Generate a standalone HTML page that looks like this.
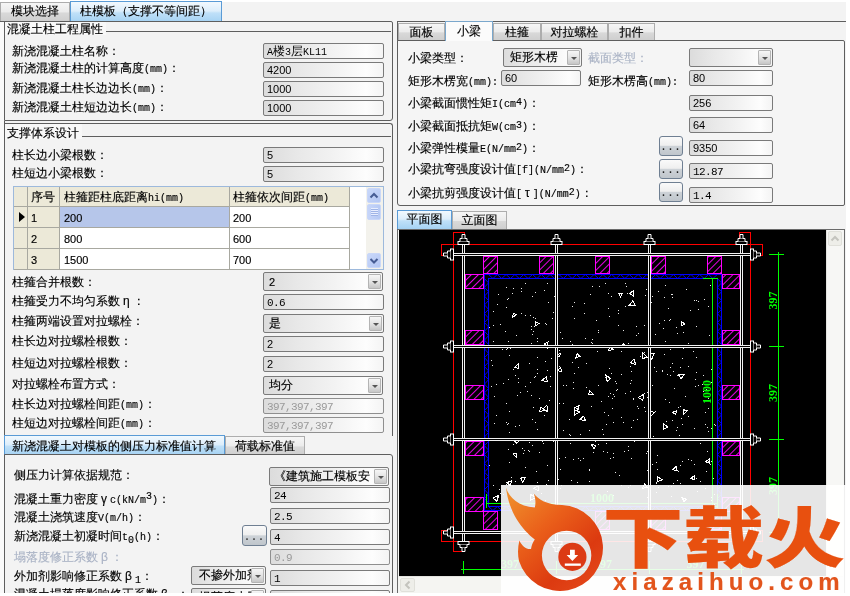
<!DOCTYPE html>
<html lang="zh-CN"><head><meta charset="utf-8"><title>柱模板（支撑不等间距）</title>
<style>
*{box-sizing:border-box;margin:0;padding:0}
html,body{width:850px;height:596px;overflow:hidden;background:#fff}
body{position:relative;font-family:"Liberation Mono","WenQuanYi Zen Hei",sans-serif;font-size:12px;font-weight:400;color:#000;line-height:14px;-webkit-text-stroke-width:0.15px}
.m{font-family:"Liberation Mono",monospace;font-size:10px;font-weight:400}
.g{padding:0 3px 0 3px;font-family:"Liberation Sans","WenQuanYi Zen Hei",sans-serif;font-size:12px}
.a{position:absolute}
.bg{position:absolute;left:0;top:2px;width:846px;height:591px;background:#f3f3f3}
.lb{position:absolute;white-space:nowrap;height:14px;line-height:14px}
.dis{color:#aab3c5}
.in{position:absolute;border:1px solid #7a7a7a;border-radius:2px;background:linear-gradient(90deg,#dcdcdc 0%,#e8e8e8 28%,#f2f2f2 58%,#fdfdfd 86%,#f4f4f4 100%);font-family:"Liberation Sans","WenQuanYi Zen Hei",sans-serif;font-size:11px;font-weight:400;line-height:13px;padding:1px 0 0 3px;white-space:nowrap;overflow:hidden;-webkit-text-stroke-width:0}
.in.d{color:#9a9a9a;border-color:#8f8f8f}
.cb{position:absolute;border:1px solid #7a7a7a;border-radius:2px;background:linear-gradient(90deg,#dcdcdc 0%,#e8e8e8 28%,#f2f2f2 58%,#fdfdfd 86%,#f4f4f4 100%);font-size:12px;line-height:16px;padding:1px 0 0 5px;white-space:nowrap;overflow:hidden}
.cb i{position:absolute;right:1px;top:1px;width:13px;bottom:1px;border:1px solid #b4b4b4;background:linear-gradient(#f6f6f6 0%,#e4e4e4 50%,#c6c6c6 100%);border-radius:1px}
.cb i:after{content:"";position:absolute;left:2.5px;top:5.5px;border:3px solid transparent;border-top:3px solid #555;border-bottom:0}
.btn{position:absolute;border:1px solid #6f7f92;border-radius:3px;background:linear-gradient(#fafafa 0%,#efefef 46%,#cdd2d7 52%,#c0c6cc 100%);text-align:center;font-family:"Liberation Mono",monospace;font-size:10px;font-weight:400;line-height:20px;letter-spacing:1px;color:#222}
.ln{position:absolute;background:#5e5e5e}
.tab{position:absolute;border:1px solid #adadad;border-bottom:0;background:linear-gradient(#f6f6f6 0%,#ebebeb 50%,#d9d9d9 55%,#cfcfcf 100%);text-align:center;white-space:nowrap}
.tab.sel{border-color:#5a9bd6;background:linear-gradient(#f2f9fe 0%,#ddeefb 45%,#bfe0f8 55%,#a5d2f3 100%)}
.tab.w{border-color:#7aa7cc;background:#fbfbfb}
</style></head>
<body>
<div id="root" style="position:absolute;left:0;top:0;width:850px;height:596px;will-change:transform">
<div class="bg"></div>
<div class="a" style="left:0;top:22px;width:4px;height:571px;background:#fafafa"></div>
<div class="tab " style="left:0px;top:2px;width:70px;height:19px;line-height:19px;">模块选择</div>
<div class="tab sel" style="left:70px;top:1px;width:152px;height:21px;line-height:21px;">柱模板（支撑不等间距）</div>
<div class="ln" style="left:0px;top:21px;width:5px;height:1px;"></div>
<div class="a" style="left:4px;top:21px;width:389px;height:100px;border:1px solid #5e5e5e;border-radius:0 2px 3px 0"></div>
<div class="a" style="left:4px;top:123px;width:389px;height:313px;border:1px solid #5e5e5e;border-bottom:0;border-radius:0 3px 0 0"></div>
<div class="ln" style="left:4px;top:121px;width:1px;height:472px;"></div>
<div class="ln" style="left:104px;top:31px;width:287px;height:1px;"></div>
<div class="ln" style="left:82px;top:136px;width:309px;height:1px;"></div>
<div class="a" style="left:5px;top:22px;width:101px;height:13px;background:#f8f8f8"></div>
<div class="lb " style="left:7px;top:23px">混凝土柱工程属性</div>
<div class="a" style="left:5px;top:124px;width:77px;height:15px;background:#f8f8f8"></div>
<div class="lb " style="left:7px;top:127px">支撑体系设计</div>
<div class="lb " style="left:12px;top:45px">新浇混凝土柱名称：</div>
<div class="lb " style="left:12px;top:62px">新浇混凝土柱的计算高度<span class="m">(mm)</span>：</div>
<div class="lb " style="left:12px;top:82px">新浇混凝土柱长边边长<span class="m">(mm)</span>：</div>
<div class="lb " style="left:12px;top:101px">新浇混凝土柱短边边长<span class="m">(mm)</span>：</div>
<div class="lb " style="left:12px;top:149px">柱长边小梁根数：</div>
<div class="lb " style="left:12px;top:167px">柱短边小梁根数：</div>
<div class="lb " style="left:12px;top:276px">柱箍合并根数：</div>
<div class="lb " style="left:12px;top:294px">柱箍受力不均匀系数<span class="g">η</span>：</div>
<div class="lb " style="left:12px;top:315px">柱箍两端设置对拉螺栓：</div>
<div class="lb " style="left:12px;top:335px">柱长边对拉螺栓根数：</div>
<div class="lb " style="left:12px;top:357px">柱短边对拉螺栓根数：</div>
<div class="lb " style="left:12px;top:378px">对拉螺栓布置方式：</div>
<div class="lb " style="left:12px;top:398px">柱长边对拉螺栓间距<span class="m">(mm)</span>：</div>
<div class="lb " style="left:12px;top:417px">柱短边对拉螺栓间距<span class="m">(mm)</span>：</div>
<div class="in " style="left:263px;top:43px;width:121px;height:16px"><span style="font-family:'Liberation Mono','WenQuanYi Zen Hei',sans-serif;font-size:12px;font-weight:400"><span class="m">A</span>楼<span class="m">3</span>层<span class="m">KL11</span></span></div>
<div class="in " style="left:263px;top:62px;width:121px;height:16px">4200</div>
<div class="in " style="left:263px;top:81px;width:121px;height:16px">1000</div>
<div class="in " style="left:263px;top:100px;width:121px;height:16px">1000</div>
<div class="in " style="left:263px;top:147px;width:121px;height:16px">5</div>
<div class="in " style="left:263px;top:166px;width:121px;height:16px">5</div>
<div class="cb" style="left:263px;top:272px;width:120px;height:19px;"><span style="font-family:'Liberation Sans',sans-serif;font-size:11px;font-weight:400">2</span><i></i></div>
<div class="in " style="left:263px;top:294px;width:121px;height:16px"><span class="m" style="font-size:11px;letter-spacing:-0.6px">0.6</span></div>
<div class="cb" style="left:263px;top:314px;width:121px;height:19px;">是<i></i></div>
<div class="in " style="left:263px;top:336px;width:121px;height:16px">2</div>
<div class="in " style="left:263px;top:356px;width:121px;height:16px">2</div>
<div class="cb" style="left:263px;top:376px;width:120px;height:19px;">均分<i></i></div>
<div class="in d" style="left:263px;top:398px;width:121px;height:16px"><span class="m" style="font-size:11px;letter-spacing:-0.6px">397,397,397</span></div>
<div class="in d" style="left:263px;top:417px;width:121px;height:16px"><span class="m" style="font-size:11px;letter-spacing:-0.6px">397,397,397</span></div>
<div class="a" style="left:13px;top:186px;width:371px;height:84px;background:#fff;border:1px solid #9db9dc"></div>
<div class="a" style="left:14px;top:187px;width:14px;height:20px;background:#ece9d8;border-right:1px solid #a8a8a0;border-bottom:1px solid #a8a8a0;padding:4px 0 0 4px;white-space:nowrap;overflow:hidden;"></div>
<div class="a" style="left:28px;top:187px;width:32px;height:20px;background:#ece9d8;border-right:1px solid #a8a8a0;border-bottom:1px solid #a8a8a0;padding:4px 0 0 4px;white-space:nowrap;overflow:hidden;padding-left:3px;">序号</div>
<div class="a" style="left:60px;top:187px;width:170px;height:20px;background:#ece9d8;border-right:1px solid #a8a8a0;border-bottom:1px solid #a8a8a0;padding:4px 0 0 4px;white-space:nowrap;overflow:hidden;">柱箍距柱底距离<span class="m">hi(mm)</span></div>
<div class="a" style="left:230px;top:187px;width:120px;height:20px;background:#ece9d8;border-right:1px solid #a8a8a0;border-bottom:1px solid #a8a8a0;padding:4px 0 0 4px;white-space:nowrap;overflow:hidden;padding-left:3px;">柱箍依次间距<span class="m">(mm)</span></div>
<div class="a" style="left:14px;top:207px;width:14px;height:21px;background:#ece9d8;border-right:1px solid #a8a8a0;border-bottom:1px solid #a8a8a0;padding:4px 0 0 4px;white-space:nowrap;overflow:hidden;"></div>
<div class="a" style="left:28px;top:207px;width:32px;height:21px;background:#ece9d8;border-right:1px solid #a8a8a0;border-bottom:1px solid #a8a8a0;padding:4px 0 0 4px;white-space:nowrap;overflow:hidden;font-family:'Liberation Sans',sans-serif;font-size:11px;font-weight:400;padding-top:4px;padding-left:3px;">1</div>
<div class="a" style="left:60px;top:207px;width:170px;height:21px;background:#b6c6ea;border-right:1px solid #a8a8a0;border-bottom:1px solid #a8a8a0;padding:4px 0 0 4px;white-space:nowrap;overflow:hidden;font-family:'Liberation Sans',sans-serif;font-size:11px;font-weight:400;padding-top:4px;">200</div>
<div class="a" style="left:230px;top:207px;width:120px;height:21px;background:#fff;border-right:1px solid #a8a8a0;border-bottom:1px solid #a8a8a0;padding:4px 0 0 4px;white-space:nowrap;overflow:hidden;font-family:'Liberation Sans',sans-serif;font-size:11px;font-weight:400;padding-top:4px;padding-left:3px;">200</div>
<div class="a" style="left:14px;top:228px;width:14px;height:21px;background:#ece9d8;border-right:1px solid #a8a8a0;border-bottom:1px solid #a8a8a0;padding:4px 0 0 4px;white-space:nowrap;overflow:hidden;"></div>
<div class="a" style="left:28px;top:228px;width:32px;height:21px;background:#ece9d8;border-right:1px solid #a8a8a0;border-bottom:1px solid #a8a8a0;padding:4px 0 0 4px;white-space:nowrap;overflow:hidden;font-family:'Liberation Sans',sans-serif;font-size:11px;font-weight:400;padding-top:4px;padding-left:3px;">2</div>
<div class="a" style="left:60px;top:228px;width:170px;height:21px;background:#fff;border-right:1px solid #a8a8a0;border-bottom:1px solid #a8a8a0;padding:4px 0 0 4px;white-space:nowrap;overflow:hidden;font-family:'Liberation Sans',sans-serif;font-size:11px;font-weight:400;padding-top:4px;">800</div>
<div class="a" style="left:230px;top:228px;width:120px;height:21px;background:#fff;border-right:1px solid #a8a8a0;border-bottom:1px solid #a8a8a0;padding:4px 0 0 4px;white-space:nowrap;overflow:hidden;font-family:'Liberation Sans',sans-serif;font-size:11px;font-weight:400;padding-top:4px;padding-left:3px;">600</div>
<div class="a" style="left:14px;top:249px;width:14px;height:21px;background:#ece9d8;border-right:1px solid #a8a8a0;border-bottom:1px solid #a8a8a0;padding:4px 0 0 4px;white-space:nowrap;overflow:hidden;"></div>
<div class="a" style="left:28px;top:249px;width:32px;height:21px;background:#ece9d8;border-right:1px solid #a8a8a0;border-bottom:1px solid #a8a8a0;padding:4px 0 0 4px;white-space:nowrap;overflow:hidden;font-family:'Liberation Sans',sans-serif;font-size:11px;font-weight:400;padding-top:4px;padding-left:3px;">3</div>
<div class="a" style="left:60px;top:249px;width:170px;height:21px;background:#fff;border-right:1px solid #a8a8a0;border-bottom:1px solid #a8a8a0;padding:4px 0 0 4px;white-space:nowrap;overflow:hidden;font-family:'Liberation Sans',sans-serif;font-size:11px;font-weight:400;padding-top:4px;">1500</div>
<div class="a" style="left:230px;top:249px;width:120px;height:21px;background:#fff;border-right:1px solid #a8a8a0;border-bottom:1px solid #a8a8a0;padding:4px 0 0 4px;white-space:nowrap;overflow:hidden;font-family:'Liberation Sans',sans-serif;font-size:11px;font-weight:400;padding-top:4px;padding-left:3px;">700</div>
<div class="a" style="left:19px;top:212px;border:5px solid transparent;border-left:6px solid #000;border-right:0"></div>
<div class="a" style="left:366px;top:187px;width:17px;height:82px;background:#f3f2ec"></div>
<div class="a" style="left:367px;top:188px;width:14px;height:15px;border:1px solid #c9d7f8;border-radius:2px;background:linear-gradient(135deg,#c9d8fa,#b3c6f3)"><svg width="12" height="13" viewBox="0 0 12 13" style="position:absolute;left:0;top:0"><path d="M2.5 8.5L6 5l3.5 3.5" fill="none" stroke="#465c94" stroke-width="2"/></svg></div>
<div class="a" style="left:367px;top:253px;width:14px;height:15px;border:1px solid #c9d7f8;border-radius:2px;background:linear-gradient(135deg,#c9d8fa,#b3c6f3)"><svg width="12" height="13" viewBox="0 0 12 13" style="position:absolute;left:0;top:0"><path d="M2.5 5L6 8.5l3.5-3.5" fill="none" stroke="#465c94" stroke-width="2"/></svg></div>
<div class="a" style="left:367px;top:204px;width:14px;height:16px;border:1px solid #c9d7f8;border-radius:2px;background:linear-gradient(90deg,#c6d5f9,#b6c9f4)"><div class="a" style="left:3px;top:3px;width:7px;height:8px;background:repeating-linear-gradient(#e8eeff 0,#e8eeff 1px,#9fb4e6 1px,#9fb4e6 2px)"></div></div>
<div class="tab sel" style="left:4px;top:435px;width:221px;height:20px;line-height:22px;text-align:left;padding-left:7px;">新浇混凝土对模板的侧压力标准值计算</div>
<div class="tab " style="left:225px;top:436px;width:80px;height:19px;line-height:20px;">荷载标准值</div>
<div class="a" style="left:4px;top:454px;width:389px;height:150px;border:1px solid #5e5e5e;border-radius:0 3px 0 0"></div>
<div class="lb " style="left:14px;top:469px">侧压力计算依据规范：</div>
<div class="lb " style="left:14px;top:511px">混凝土浇筑速度<span class="m">V(m/h)</span>：</div>
<div class="lb " style="left:14px;top:492px">混凝土重力密度<span class="g">γ</span><span class="m">c(kN/m<span style="position:relative;top:-4px">3</span>)</span>：</div>
<div class="lb " style="left:14px;top:530px">新浇混凝土初凝时间<span class="m">t<span style="position:relative;top:3px">0</span>(h)</span>：</div>
<div class="lb dis" style="left:14px;top:550px">塌落度修正系数<span class="g">β</span>：</div>
<div class="lb " style="left:14px;top:569px">外加剂影响修正系数<span class="g">β</span><span class="m"><span style="position:relative;top:3px">1</span></span>：</div>
<div class="lb " style="left:14px;top:587px">混凝土塌落度影响修正系数<span class="g">β</span><span class="m"><span style="position:relative;top:3px">2</span></span>：</div>
<div class="cb" style="left:269px;top:467px;width:120px;height:19px;padding-left:4px;">《建筑施工模板安<i></i></div>
<div class="in " style="left:270px;top:487px;width:120px;height:16px"><span class="m" style="font-size:11px;letter-spacing:-0.6px">24</span></div>
<div class="in " style="left:270px;top:508px;width:120px;height:16px"><span class="m" style="font-size:11px;letter-spacing:-0.6px">2.5</span></div>
<div class="in " style="left:270px;top:529px;width:120px;height:16px"><span class="m" style="font-size:11px;letter-spacing:-0.6px">4</span></div>
<div class="in d" style="left:270px;top:549px;width:120px;height:16px"><span class="m" style="font-size:11px;letter-spacing:-0.6px">0.9</span></div>
<div class="in " style="left:270px;top:570px;width:120px;height:16px"><span class="m" style="font-size:11px;letter-spacing:-0.6px">1</span></div>
<div class="in " style="left:270px;top:590px;width:120px;height:16px"></div>
<div class="btn" style="left:242px;top:525px;width:25px;height:21px;line-height:23px">...</div>
<div class="cb" style="left:191px;top:566px;width:75px;height:19px;padding-left:7px;">不掺外加剂<i></i></div>
<div class="cb" style="left:191px;top:588px;width:75px;height:19px;padding-left:7px;">坍落度小于<i></i></div>
<div class="ln" style="left:397px;top:21px;width:449px;height:1px;"></div>
<div class="ln" style="left:397px;top:21px;width:1px;height:20px;"></div>
<div class="a" style="left:397px;top:40px;width:448px;height:166px;border:1px solid #5e5e5e;background:#f5f5f5;border-radius:0 2px 2px 3px"></div>
<div class="tab " style="left:398px;top:23px;width:47px;height:17px;line-height:19px;">面板</div>
<div class="tab " style="left:493px;top:23px;width:48px;height:17px;line-height:19px;">柱箍</div>
<div class="tab " style="left:541px;top:23px;width:67px;height:17px;line-height:19px;">对拉螺栓</div>
<div class="tab " style="left:608px;top:23px;width:47px;height:17px;line-height:19px;">扣件</div>
<div class="tab w" style="left:445px;top:21px;width:48px;height:20px;line-height:20px;">小梁</div>
<div class="lb " style="left:408px;top:52px">小梁类型：</div>
<div class="lb " style="left:408px;top:75px">矩形木楞宽<span class="m">(mm):</span></div>
<div class="lb " style="left:408px;top:97px">小梁截面惯性矩<span class="m">I(cm<span style="position:relative;top:-2px">4</span>)</span>：</div>
<div class="lb " style="left:408px;top:120px">小梁截面抵抗矩<span class="m">W(cm<span style="position:relative;top:-2px">3</span>)</span>：</div>
<div class="lb " style="left:408px;top:142px">小梁弹性模量<span class="m">E(N/mm<span style="position:relative;top:-2px">2</span>)</span>：</div>
<div class="lb " style="left:408px;top:163px">小梁抗弯强度设计值<span class="m">[f](N/mm<span style="position:relative;top:-2px">2</span>)</span>：</div>
<div class="lb " style="left:408px;top:186px">小梁抗剪强度设计值<span class="m">[</span><span class="g">τ</span><span class="m">](N/mm<span style="position:relative;top:-2px">2</span>)</span>：</div>
<div class="cb" style="left:503px;top:48px;width:79px;height:19px;padding-left:6px;">矩形木楞<i></i></div>
<div class="lb dis" style="left:588px;top:52px">截面类型：</div>
<div class="cb" style="left:689px;top:48px;width:84px;height:19px;"><i></i></div>
<div class="in " style="left:501px;top:70px;width:80px;height:16px">60</div>
<div class="lb " style="left:588px;top:75px">矩形木楞高<span class="m">(mm):</span></div>
<div class="in " style="left:689px;top:70px;width:84px;height:16px">80</div>
<div class="in " style="left:689px;top:95px;width:84px;height:16px">256</div>
<div class="in " style="left:689px;top:117px;width:84px;height:16px">64</div>
<div class="in " style="left:689px;top:140px;width:84px;height:16px">9350</div>
<div class="in " style="left:689px;top:163px;width:84px;height:16px"><span class="m" style="font-size:11px;letter-spacing:-0.6px">12.87</span></div>
<div class="in " style="left:689px;top:187px;width:84px;height:16px"><span class="m" style="font-size:11px;letter-spacing:-0.6px">1.4</span></div>
<div class="btn" style="left:659px;top:136px;width:24px;height:20px;line-height:22px">...</div>
<div class="btn" style="left:659px;top:159px;width:24px;height:20px;line-height:22px">...</div>
<div class="btn" style="left:659px;top:182px;width:24px;height:20px;line-height:22px">...</div>
<div class="tab sel" style="left:397px;top:210px;width:55px;height:19px;line-height:18px;">平面图</div>
<div class="tab " style="left:452px;top:211px;width:55px;height:18px;line-height:18px;">立面图</div>
<div class="a" style="left:397px;top:229px;width:448px;height:365px;border:1px solid #6a6a6a;border-bottom:0;background:#f4f4f2"></div>
<svg class="a" style="left:399px;top:230px" width="427" height="346" viewBox="399 230 427 346" shape-rendering="crispEdges">
<rect x="399" y="229" width="427" height="347" fill="#000"/>
<defs><pattern id="hz" width="5" height="5" patternUnits="userSpaceOnUse" patternTransform="rotate(-45)"><rect width="5" height="5" fill="#000"/><line x1="0" y1="2.5" x2="5" y2="2.5" stroke="#f0f" stroke-width="0.9"/></pattern></defs>
<g fill="#e8e8e8"><rect x="591" y="406" width="1" height="1"/><rect x="698" y="385" width="1" height="1"/><rect x="604" y="412" width="1" height="1"/><rect x="531" y="395" width="1" height="1"/><rect x="631" y="458" width="1" height="1"/><rect x="510" y="348" width="1" height="1"/><rect x="509" y="462" width="1" height="1"/><rect x="646" y="289" width="1" height="1"/><rect x="711" y="497" width="1" height="1"/><rect x="637" y="419" width="1" height="1"/><rect x="525" y="283" width="1" height="1"/><rect x="608" y="293" width="1" height="1"/><rect x="532" y="334" width="1" height="1"/><rect x="496" y="384" width="1" height="1"/><rect x="589" y="470" width="1" height="1"/><rect x="606" y="424" width="1" height="1"/><rect x="602" y="429" width="1" height="1"/><rect x="592" y="343" width="1" height="1"/><rect x="714" y="504" width="1" height="1"/><rect x="679" y="439" width="1" height="1"/><rect x="560" y="332" width="1" height="1"/><rect x="554" y="296" width="1" height="1"/><rect x="662" y="370" width="1" height="1"/><rect x="680" y="367" width="1" height="1"/><rect x="706" y="471" width="1" height="1"/><rect x="489" y="327" width="1" height="1"/><rect x="695" y="386" width="1" height="1"/><rect x="711" y="369" width="1" height="1"/><rect x="506" y="422" width="1" height="1"/><rect x="665" y="341" width="1" height="1"/><rect x="509" y="355" width="1" height="1"/><rect x="707" y="451" width="1" height="1"/><rect x="516" y="335" width="1" height="1"/><rect x="512" y="293" width="1" height="1"/><rect x="669" y="320" width="1" height="1"/><rect x="615" y="381" width="1" height="1"/><rect x="532" y="445" width="1" height="1"/><rect x="519" y="425" width="1" height="1"/><rect x="515" y="375" width="1" height="1"/><rect x="537" y="341" width="1" height="1"/><rect x="708" y="461" width="1" height="1"/><rect x="558" y="479" width="1" height="1"/><rect x="537" y="369" width="1" height="1"/><rect x="682" y="424" width="1" height="1"/><rect x="512" y="503" width="1" height="1"/><rect x="537" y="338" width="1" height="1"/><rect x="664" y="354" width="1" height="1"/><rect x="556" y="297" width="1" height="1"/><rect x="509" y="411" width="1" height="1"/><rect x="544" y="415" width="1" height="1"/><rect x="573" y="382" width="1" height="1"/><rect x="706" y="389" width="1" height="1"/><rect x="619" y="475" width="1" height="1"/><rect x="530" y="315" width="1" height="1"/><rect x="694" y="464" width="1" height="1"/><rect x="545" y="323" width="1" height="1"/><rect x="656" y="492" width="1" height="1"/><rect x="533" y="494" width="1" height="1"/><rect x="688" y="416" width="1" height="1"/><rect x="584" y="303" width="1" height="1"/><rect x="498" y="497" width="1" height="1"/><rect x="543" y="439" width="1" height="1"/><rect x="547" y="465" width="1" height="1"/><rect x="624" y="346" width="1" height="1"/><rect x="529" y="442" width="1" height="1"/><rect x="505" y="331" width="1" height="1"/><rect x="615" y="472" width="1" height="1"/><rect x="628" y="343" width="1" height="1"/><rect x="696" y="326" width="1" height="1"/><rect x="493" y="341" width="1" height="1"/><rect x="590" y="294" width="1" height="1"/><rect x="529" y="363" width="1" height="1"/><rect x="618" y="310" width="1" height="1"/><rect x="571" y="480" width="1" height="1"/><rect x="711" y="428" width="1" height="1"/><rect x="645" y="411" width="1" height="1"/><rect x="521" y="288" width="1" height="1"/><rect x="493" y="485" width="1" height="1"/><rect x="647" y="497" width="1" height="1"/><rect x="494" y="423" width="1" height="1"/><rect x="598" y="444" width="1" height="1"/><rect x="561" y="505" width="1" height="1"/><rect x="506" y="403" width="1" height="1"/><rect x="656" y="483" width="1" height="1"/><rect x="656" y="438" width="1" height="1"/><rect x="668" y="486" width="1" height="1"/><rect x="569" y="434" width="1" height="1"/><rect x="693" y="476" width="1" height="1"/><rect x="583" y="458" width="1" height="1"/><rect x="684" y="409" width="1" height="1"/><rect x="630" y="366" width="1" height="1"/><rect x="621" y="417" width="1" height="1"/><rect x="507" y="424" width="1" height="1"/><rect x="713" y="478" width="1" height="1"/><rect x="654" y="367" width="1" height="1"/><rect x="655" y="411" width="1" height="1"/><rect x="589" y="469" width="1" height="1"/><rect x="508" y="449" width="1" height="1"/><rect x="496" y="415" width="1" height="1"/><rect x="598" y="332" width="1" height="1"/><rect x="647" y="392" width="1" height="1"/><rect x="628" y="487" width="1" height="1"/><rect x="547" y="283" width="1" height="1"/><rect x="557" y="433" width="1" height="1"/><rect x="535" y="318" width="1" height="1"/><rect x="694" y="428" width="1" height="1"/><rect x="589" y="481" width="1" height="1"/><rect x="563" y="430" width="1" height="1"/><rect x="534" y="377" width="1" height="1"/><rect x="671" y="486" width="1" height="1"/><rect x="688" y="366" width="1" height="1"/><rect x="621" y="351" width="1" height="1"/><rect x="520" y="392" width="1" height="1"/><rect x="678" y="471" width="1" height="1"/><rect x="650" y="494" width="1" height="1"/><rect x="552" y="318" width="1" height="1"/><rect x="591" y="342" width="1" height="1"/><rect x="537" y="373" width="1" height="1"/><rect x="630" y="391" width="1" height="1"/><rect x="560" y="469" width="1" height="1"/><rect x="711" y="382" width="1" height="1"/><rect x="506" y="287" width="1" height="1"/><rect x="686" y="289" width="1" height="1"/><rect x="649" y="408" width="1" height="1"/><rect x="559" y="458" width="1" height="1"/><rect x="493" y="311" width="1" height="1"/><rect x="592" y="286" width="1" height="1"/><rect x="677" y="333" width="1" height="1"/><rect x="521" y="291" width="1" height="1"/><rect x="631" y="380" width="1" height="1"/><rect x="631" y="427" width="1" height="1"/><rect x="671" y="496" width="1" height="1"/><rect x="644" y="325" width="1" height="1"/><rect x="596" y="320" width="1" height="1"/><rect x="491" y="386" width="1" height="1"/><rect x="650" y="320" width="1" height="1"/><rect x="551" y="358" width="1" height="1"/><rect x="647" y="397" width="1" height="1"/><rect x="628" y="450" width="1" height="1"/><rect x="578" y="458" width="1" height="1"/><rect x="694" y="300" width="1" height="1"/><rect x="700" y="443" width="1" height="1"/><rect x="518" y="382" width="1" height="1"/><rect x="630" y="485" width="1" height="1"/><rect x="574" y="408" width="1" height="1"/><rect x="688" y="459" width="1" height="1"/><rect x="702" y="384" width="1" height="1"/><rect x="636" y="326" width="1" height="1"/><rect x="652" y="464" width="1" height="1"/><rect x="634" y="441" width="1" height="1"/><rect x="537" y="482" width="1" height="1"/><rect x="711" y="500" width="1" height="1"/><rect x="610" y="458" width="1" height="1"/><rect x="561" y="485" width="1" height="1"/><rect x="682" y="358" width="1" height="1"/><rect x="508" y="379" width="1" height="1"/><rect x="613" y="453" width="1" height="1"/><rect x="599" y="286" width="1" height="1"/><rect x="672" y="294" width="1" height="1"/><rect x="670" y="319" width="1" height="1"/><rect x="565" y="457" width="1" height="1"/><rect x="521" y="313" width="1" height="1"/><rect x="606" y="443" width="1" height="1"/><rect x="679" y="435" width="1" height="1"/><rect x="703" y="391" width="1" height="1"/><rect x="704" y="299" width="1" height="1"/><rect x="539" y="398" width="1" height="1"/><rect x="555" y="444" width="1" height="1"/><rect x="633" y="398" width="1" height="1"/><rect x="680" y="406" width="1" height="1"/><rect x="559" y="366" width="1" height="1"/><rect x="680" y="483" width="1" height="1"/><rect x="536" y="471" width="1" height="1"/><rect x="708" y="398" width="1" height="1"/><rect x="618" y="325" width="1" height="1"/><rect x="610" y="393" width="1" height="1"/><rect x="626" y="286" width="1" height="1"/><rect x="708" y="396" width="1" height="1"/><rect x="580" y="460" width="1" height="1"/><rect x="616" y="390" width="1" height="1"/><rect x="645" y="295" width="1" height="1"/><rect x="611" y="373" width="1" height="1"/><rect x="705" y="488" width="1" height="1"/><rect x="550" y="386" width="1" height="1"/><rect x="518" y="378" width="1" height="1"/><rect x="673" y="483" width="1" height="1"/><rect x="597" y="351" width="1" height="1"/><rect x="532" y="419" width="1" height="1"/><rect x="698" y="309" width="1" height="1"/><rect x="665" y="285" width="1" height="1"/><rect x="533" y="331" width="1" height="1"/><rect x="644" y="352" width="1" height="1"/><rect x="569" y="419" width="1" height="1"/><rect x="513" y="444" width="1" height="1"/><rect x="517" y="395" width="1" height="1"/><rect x="546" y="324" width="1" height="1"/><rect x="609" y="378" width="1" height="1"/><rect x="574" y="373" width="1" height="1"/><rect x="609" y="316" width="1" height="1"/><rect x="535" y="422" width="1" height="1"/><rect x="633" y="399" width="1" height="1"/><rect x="681" y="418" width="1" height="1"/><rect x="683" y="332" width="1" height="1"/><rect x="656" y="462" width="1" height="1"/><rect x="693" y="351" width="1" height="1"/><rect x="560" y="488" width="1" height="1"/><rect x="538" y="505" width="1" height="1"/><rect x="690" y="310" width="1" height="1"/><rect x="543" y="443" width="1" height="1"/><rect x="548" y="302" width="1" height="1"/><rect x="677" y="375" width="1" height="1"/><rect x="668" y="308" width="1" height="1"/><rect x="580" y="434" width="1" height="1"/><rect x="493" y="325" width="1" height="1"/><rect x="643" y="485" width="1" height="1"/><rect x="708" y="306" width="1" height="1"/><rect x="603" y="451" width="1" height="1"/><rect x="603" y="434" width="1" height="1"/><rect x="532" y="296" width="1" height="1"/><rect x="513" y="288" width="1" height="1"/><rect x="614" y="396" width="1" height="1"/><rect x="618" y="313" width="1" height="1"/><rect x="531" y="326" width="1" height="1"/><rect x="679" y="503" width="1" height="1"/><rect x="698" y="301" width="1" height="1"/><rect x="503" y="494" width="1" height="1"/><rect x="593" y="452" width="1" height="1"/><rect x="563" y="385" width="1" height="1"/><rect x="605" y="377" width="1" height="1"/><rect x="625" y="283" width="1" height="1"/><rect x="647" y="470" width="1" height="1"/><rect x="530" y="382" width="1" height="1"/><rect x="656" y="371" width="1" height="1"/><rect x="533" y="317" width="1" height="1"/><rect x="605" y="283" width="1" height="1"/><rect x="691" y="460" width="1" height="1"/><rect x="648" y="474" width="1" height="1"/><rect x="631" y="371" width="1" height="1"/><rect x="625" y="393" width="1" height="1"/><rect x="711" y="461" width="1" height="1"/><rect x="547" y="485" width="1" height="1"/><rect x="657" y="455" width="1" height="1"/><rect x="673" y="371" width="1" height="1"/><rect x="692" y="478" width="1" height="1"/><rect x="646" y="453" width="1" height="1"/><rect x="662" y="371" width="1" height="1"/><rect x="652" y="296" width="1" height="1"/><rect x="566" y="385" width="1" height="1"/><rect x="491" y="360" width="1" height="1"/><rect x="633" y="420" width="1" height="1"/><rect x="541" y="493" width="1" height="1"/><rect x="640" y="356" width="1" height="1"/><rect x="638" y="408" width="1" height="1"/><rect x="609" y="368" width="1" height="1"/><rect x="715" y="425" width="1" height="1"/><rect x="647" y="451" width="1" height="1"/><rect x="710" y="285" width="1" height="1"/><rect x="628" y="446" width="1" height="1"/><rect x="547" y="370" width="1" height="1"/><rect x="500" y="324" width="1" height="1"/><rect x="574" y="302" width="1" height="1"/><rect x="546" y="484" width="1" height="1"/><rect x="613" y="394" width="1" height="1"/><rect x="708" y="408" width="1" height="1"/><rect x="714" y="424" width="1" height="1"/><rect x="672" y="297" width="1" height="1"/><rect x="624" y="451" width="1" height="1"/><rect x="499" y="489" width="1" height="1"/><rect x="525" y="386" width="1" height="1"/><rect x="527" y="391" width="1" height="1"/><rect x="627" y="293" width="1" height="1"/><rect x="703" y="375" width="1" height="1"/><rect x="608" y="415" width="1" height="1"/><rect x="572" y="344" width="1" height="1"/><rect x="637" y="406" width="1" height="1"/><rect x="553" y="441" width="1" height="1"/><rect x="556" y="283" width="1" height="1"/><rect x="544" y="290" width="1" height="1"/><rect x="524" y="450" width="1" height="1"/><rect x="577" y="482" width="1" height="1"/><rect x="658" y="291" width="1" height="1"/><rect x="712" y="493" width="1" height="1"/><rect x="506" y="484" width="1" height="1"/><rect x="586" y="387" width="1" height="1"/><rect x="709" y="335" width="1" height="1"/><rect x="607" y="491" width="1" height="1"/><rect x="652" y="385" width="1" height="1"/><rect x="710" y="464" width="1" height="1"/><rect x="625" y="306" width="1" height="1"/><rect x="630" y="383" width="1" height="1"/><rect x="535" y="292" width="1" height="1"/><rect x="608" y="308" width="1" height="1"/><rect x="589" y="430" width="1" height="1"/><rect x="592" y="339" width="1" height="1"/><rect x="621" y="374" width="1" height="1"/><rect x="665" y="399" width="1" height="1"/><rect x="714" y="494" width="1" height="1"/><rect x="655" y="334" width="1" height="1"/><rect x="515" y="481" width="1" height="1"/><rect x="666" y="421" width="1" height="1"/><rect x="570" y="341" width="1" height="1"/><rect x="644" y="407" width="1" height="1"/><rect x="623" y="422" width="1" height="1"/><rect x="659" y="323" width="1" height="1"/><rect x="545" y="500" width="1" height="1"/><rect x="696" y="478" width="1" height="1"/><rect x="498" y="294" width="1" height="1"/><rect x="550" y="376" width="1" height="1"/><rect x="630" y="303" width="1" height="1"/><rect x="611" y="296" width="1" height="1"/><rect x="509" y="432" width="1" height="1"/><rect x="613" y="422" width="1" height="1"/><rect x="573" y="388" width="1" height="1"/><rect x="537" y="357" width="1" height="1"/><rect x="657" y="469" width="1" height="1"/><rect x="506" y="307" width="1" height="1"/><rect x="672" y="420" width="1" height="1"/><rect x="663" y="328" width="1" height="1"/><rect x="585" y="338" width="1" height="1"/><rect x="672" y="363" width="1" height="1"/><rect x="637" y="503" width="1" height="1"/><rect x="563" y="403" width="1" height="1"/><rect x="658" y="487" width="1" height="1"/><rect x="586" y="363" width="1" height="1"/><rect x="511" y="477" width="1" height="1"/><rect x="507" y="299" width="1" height="1"/><rect x="617" y="389" width="1" height="1"/><rect x="644" y="347" width="1" height="1"/><rect x="664" y="297" width="1" height="1"/><rect x="537" y="429" width="1" height="1"/><rect x="507" y="348" width="1" height="1"/><rect x="653" y="436" width="1" height="1"/><rect x="553" y="312" width="1" height="1"/><rect x="570" y="443" width="1" height="1"/><rect x="572" y="306" width="1" height="1"/><rect x="649" y="408" width="1" height="1"/><rect x="697" y="491" width="1" height="1"/><rect x="695" y="379" width="1" height="1"/><rect x="670" y="349" width="1" height="1"/><rect x="561" y="370" width="1" height="1"/><rect x="700" y="481" width="1" height="1"/><rect x="545" y="361" width="1" height="1"/><rect x="572" y="362" width="1" height="1"/><rect x="578" y="367" width="1" height="1"/><rect x="533" y="407" width="1" height="1"/><rect x="669" y="402" width="1" height="1"/><rect x="678" y="407" width="1" height="1"/><rect x="529" y="451" width="1" height="1"/><rect x="688" y="343" width="1" height="1"/><rect x="494" y="396" width="1" height="1"/><rect x="612" y="408" width="1" height="1"/><rect x="707" y="427" width="1" height="1"/><rect x="671" y="294" width="1" height="1"/><rect x="613" y="457" width="1" height="1"/><rect x="508" y="298" width="1" height="1"/><rect x="656" y="482" width="1" height="1"/><rect x="508" y="423" width="1" height="1"/><rect x="522" y="448" width="1" height="1"/><rect x="636" y="335" width="1" height="1"/><rect x="539" y="452" width="1" height="1"/><rect x="607" y="452" width="1" height="1"/><rect x="578" y="356" width="1" height="1"/><rect x="708" y="431" width="1" height="1"/><rect x="601" y="401" width="1" height="1"/><rect x="652" y="439" width="1" height="1"/><rect x="696" y="372" width="1" height="1"/><rect x="676" y="430" width="1" height="1"/><rect x="682" y="461" width="1" height="1"/><rect x="677" y="480" width="1" height="1"/><rect x="705" y="424" width="1" height="1"/><rect x="607" y="440" width="1" height="1"/><rect x="670" y="375" width="1" height="1"/><rect x="584" y="313" width="1" height="1"/><rect x="657" y="503" width="1" height="1"/><rect x="574" y="318" width="1" height="1"/><rect x="535" y="376" width="1" height="1"/><rect x="555" y="498" width="1" height="1"/><rect x="502" y="349" width="1" height="1"/><rect x="515" y="426" width="1" height="1"/><rect x="664" y="320" width="1" height="1"/><rect x="503" y="383" width="1" height="1"/><rect x="621" y="485" width="1" height="1"/><rect x="497" y="304" width="1" height="1"/><rect x="531" y="329" width="1" height="1"/><rect x="542" y="441" width="1" height="1"/><rect x="623" y="330" width="1" height="1"/><rect x="531" y="343" width="1" height="1"/><rect x="528" y="450" width="1" height="1"/><rect x="559" y="403" width="1" height="1"/><rect x="674" y="388" width="1" height="1"/><rect x="548" y="480" width="1" height="1"/><rect x="696" y="357" width="1" height="1"/><rect x="613" y="495" width="1" height="1"/><rect x="598" y="330" width="1" height="1"/><rect x="500" y="493" width="1" height="1"/><rect x="670" y="367" width="1" height="1"/><rect x="608" y="396" width="1" height="1"/><rect x="551" y="503" width="1" height="1"/><rect x="638" y="333" width="1" height="1"/><rect x="491" y="386" width="1" height="1"/><rect x="573" y="459" width="1" height="1"/><rect x="650" y="416" width="1" height="1"/><rect x="525" y="315" width="1" height="1"/><rect x="562" y="338" width="1" height="1"/><rect x="685" y="396" width="1" height="1"/><rect x="633" y="503" width="1" height="1"/><rect x="549" y="400" width="1" height="1"/><rect x="523" y="453" width="1" height="1"/><rect x="489" y="465" width="1" height="1"/><rect x="680" y="465" width="1" height="1"/><rect x="508" y="341" width="1" height="1"/><rect x="651" y="302" width="1" height="1"/><rect x="598" y="385" width="1" height="1"/><rect x="705" y="412" width="1" height="1"/><rect x="683" y="348" width="1" height="1"/><rect x="667" y="374" width="1" height="1"/><rect x="696" y="300" width="1" height="1"/><rect x="676" y="327" width="1" height="1"/><rect x="612" y="398" width="1" height="1"/><rect x="525" y="467" width="1" height="1"/><rect x="559" y="350" width="1" height="1"/><rect x="506" y="349" width="1" height="1"/><rect x="595" y="441" width="1" height="1"/><rect x="570" y="435" width="1" height="1"/><rect x="513" y="369" width="1" height="1"/><rect x="593" y="498" width="1" height="1"/><rect x="677" y="427" width="1" height="1"/><rect x="492" y="365" width="1" height="1"/><rect x="649" y="333" width="1" height="1"/><rect x="616" y="383" width="1" height="1"/></g>
<g fill="none" stroke="#fff" stroke-width="1" shape-rendering="crispEdges"><polygon points="496.9,501.4 493.0,497.9 498.3,495.7"/><polygon points="608.4,350.5 609.7,346.6 613.2,349.5"/><polygon points="649.1,354.0 654.4,353.4 651.7,359.2"/><polygon points="513.2,313.1 516.2,314.9 512.8,317.3"/><polygon points="675.7,414.6 672.5,412.2 676.5,410.9"/><polygon points="507.0,482.5 511.6,481.0 510.3,485.6"/><polygon points="580.1,356.3 575.5,358.2 577.1,353.5"/><polygon points="667.6,426.9 663.1,429.5 663.7,424.1"/><polygon points="518.2,363.6 518.9,368.3 514.5,367.6"/><polygon points="657.8,481.5 657.8,476.8 662.4,479.9"/><polygon points="538.3,490.6 533.6,488.1 538.7,486.0"/><polygon points="642.5,358.4 642.6,353.0 647.6,357.4"/><polygon points="520.6,478.2 525.2,477.2 522.9,482.2"/><polygon points="709.9,463.3 705.6,462.0 709.8,458.2"/><polygon points="547.2,411.4 542.8,408.9 547.0,405.2"/><polygon points="530.7,494.6 536.3,497.4 530.9,500.0"/><polygon points="579.7,411.9 574.6,414.9 574.4,409.7"/><polygon points="575.0,407.6 579.0,405.6 578.7,409.6"/><polygon points="633.6,296.0 629.5,293.4 633.7,290.3"/><polygon points="583.6,416.1 585.5,420.8 579.8,419.5"/><polygon points="672.5,469.8 676.1,466.3 677.2,470.5"/><polygon points="607.0,381.3 605.9,374.9 610.7,378.6"/><polygon points="650.9,416.4 649.4,411.8 655.0,412.1"/><polygon points="593.0,394.3 588.5,394.8 589.5,390.5"/><polygon points="562.0,371.7 557.8,370.8 560.2,367.5"/><polygon points="681.2,378.8 678.2,374.4 684.1,374.3"/><polygon points="513.3,454.1 516.2,453.2 516.4,457.5"/><polygon points="560.7,353.9 559.1,357.1 556.5,354.2"/><polygon points="622.1,293.3 620.7,297.1 618.8,293.4"/><polygon points="694.4,475.6 694.5,479.9 690.9,478.3"/><polygon points="682.0,497.6 686.5,499.1 684.0,501.5"/><polygon points="519.3,440.1 516.8,443.6 514.3,440.6"/><polygon points="647.0,487.5 642.2,488.4 644.7,483.9"/><polygon points="535.6,321.6 538.9,323.7 535.0,326.0"/><polygon points="683.6,413.9 683.6,409.8 687.4,410.9"/><polygon points="629.0,305.6 632.8,300.9 635.5,305.5"/><polygon points="623.6,343.7 625.5,347.8 621.0,346.2"/><polygon points="547.5,347.9 544.5,343.7 548.0,342.2"/><polygon points="596.1,445.2 594.1,449.0 591.5,444.8"/><polygon points="634.0,359.3 635.6,364.4 630.3,362.6"/><polygon points="642.8,400.2 638.4,397.6 643.9,394.2"/><polygon points="546.2,376.8 547.5,381.4 541.8,380.7"/><polygon points="544.5,410.5 539.6,411.5 541.1,407.0"/><polygon points="684.9,324.0 681.2,325.7 681.5,321.6"/></g>
<g stroke="#0000ff" stroke-width="1" fill="none">
<rect x="484.5" y="274.5" width="237" height="236" stroke-width="1.6"/>
<rect x="488.5" y="278.5" width="229" height="228"/>
</g><g stroke="#0000ff" stroke-width="0.9" fill="none" shape-rendering="auto">
<polyline points="488.5,274.5 492.9,278.5 497.3,274.5 501.7,278.5 506.1,274.5 510.5,278.5 514.9,274.5 519.3,278.5 523.7,274.5 528.1,278.5 532.5,274.5 536.9,278.5 541.3,274.5 545.7,278.5 550.1,274.5 554.5,278.5 558.9,274.5 563.3,278.5 567.7,274.5 572.1,278.5 576.5,274.5 580.9,278.5 585.3,274.5 589.7,278.5 594.1,274.5 598.5,278.5 602.9,274.5 607.3,278.5 611.7,274.5 616.1,278.5 620.5,274.5 624.9,278.5 629.3,274.5 633.7,278.5 638.1,274.5 642.5,278.5 646.9,274.5 651.3,278.5 655.7,274.5 660.1,278.5 664.5,274.5 668.9,278.5 673.3,274.5 677.7,278.5 682.1,274.5 686.5,278.5 690.9,274.5 695.3,278.5 699.7,274.5 704.1,278.5 708.5,274.5 712.9,278.5 717.3,274.5"/>
<polyline points="488.5,506.5 492.9,510.5 497.3,506.5 501.7,510.5 506.1,506.5 510.5,510.5 514.9,506.5 519.3,510.5 523.7,506.5 528.1,510.5 532.5,506.5 536.9,510.5 541.3,506.5 545.7,510.5 550.1,506.5 554.5,510.5 558.9,506.5 563.3,510.5 567.7,506.5 572.1,510.5 576.5,506.5 580.9,510.5 585.3,506.5 589.7,510.5 594.1,506.5 598.5,510.5 602.9,506.5 607.3,510.5 611.7,506.5 616.1,510.5 620.5,506.5 624.9,510.5 629.3,506.5 633.7,510.5 638.1,506.5 642.5,510.5 646.9,506.5 651.3,510.5 655.7,506.5 660.1,510.5 664.5,506.5 668.9,510.5 673.3,506.5 677.7,510.5 682.1,506.5 686.5,510.5 690.9,506.5 695.3,510.5 699.7,506.5 704.1,510.5 708.5,506.5 712.9,510.5 717.3,506.5"/>
<polyline points="484.5,278.5 488.5,282.9 484.5,287.3 488.5,291.7 484.5,296.1 488.5,300.5 484.5,304.9 488.5,309.3 484.5,313.7 488.5,318.1 484.5,322.5 488.5,326.9 484.5,331.3 488.5,335.7 484.5,340.1 488.5,344.5 484.5,348.9 488.5,353.3 484.5,357.7 488.5,362.1 484.5,366.5 488.5,370.9 484.5,375.3 488.5,379.7 484.5,384.1 488.5,388.5 484.5,392.9 488.5,397.3 484.5,401.7 488.5,406.1 484.5,410.5 488.5,414.9 484.5,419.3 488.5,423.7 484.5,428.1 488.5,432.5 484.5,436.9 488.5,441.3 484.5,445.7 488.5,450.1 484.5,454.5 488.5,458.9 484.5,463.3 488.5,467.7 484.5,472.1 488.5,476.5 484.5,480.9 488.5,485.3 484.5,489.7 488.5,494.1 484.5,498.5 488.5,502.9"/>
<polyline points="717.5,278.5 721.5,282.9 717.5,287.3 721.5,291.7 717.5,296.1 721.5,300.5 717.5,304.9 721.5,309.3 717.5,313.7 721.5,318.1 717.5,322.5 721.5,326.9 717.5,331.3 721.5,335.7 717.5,340.1 721.5,344.5 717.5,348.9 721.5,353.3 717.5,357.7 721.5,362.1 717.5,366.5 721.5,370.9 717.5,375.3 721.5,379.7 717.5,384.1 721.5,388.5 717.5,392.9 721.5,397.3 717.5,401.7 721.5,406.1 717.5,410.5 721.5,414.9 717.5,419.3 721.5,423.7 717.5,428.1 721.5,432.5 717.5,436.9 721.5,441.3 717.5,445.7 721.5,450.1 717.5,454.5 721.5,458.9 717.5,463.3 721.5,467.7 717.5,472.1 721.5,476.5 717.5,480.9 721.5,485.3 717.5,489.7 721.5,494.1 717.5,498.5 721.5,502.9"/>
</g>
<g stroke="#ff00ff" stroke-width="1" fill="url(#hz)"><rect x="483.5" y="256.5" width="14.0" height="17.0"/><rect x="483.5" y="511.5" width="14.0" height="18.0"/><rect x="465.5" y="274.5" width="18.0" height="14.0"/><rect x="722.5" y="274.5" width="17.0" height="14.0"/><rect x="539.5" y="256.5" width="14.0" height="17.0"/><rect x="539.5" y="511.5" width="14.0" height="18.0"/><rect x="465.5" y="330.5" width="18.0" height="14.0"/><rect x="722.5" y="330.5" width="17.0" height="14.0"/><rect x="595.5" y="256.5" width="14.0" height="17.0"/><rect x="595.5" y="511.5" width="14.0" height="18.0"/><rect x="465.5" y="385.5" width="18.0" height="14.0"/><rect x="722.5" y="385.5" width="17.0" height="14.0"/><rect x="651.5" y="256.5" width="14.0" height="17.0"/><rect x="651.5" y="511.5" width="14.0" height="18.0"/><rect x="465.5" y="441.5" width="18.0" height="14.0"/><rect x="722.5" y="441.5" width="17.0" height="14.0"/><rect x="707.5" y="256.5" width="14.0" height="17.0"/><rect x="707.5" y="511.5" width="14.0" height="18.0"/><rect x="465.5" y="497.5" width="18.0" height="14.0"/><rect x="722.5" y="497.5" width="17.0" height="14.0"/></g>
<g stroke="#00ff00" stroke-width="1" fill="none">
<line x1="712.5" y1="278" x2="712.5" y2="507"/><line x1="703" y1="278.5" x2="718" y2="278.5"/><line x1="703" y1="506.5" x2="718" y2="506.5"/>
<line x1="486.5" y1="503.5" x2="717" y2="503.5"/><line x1="486.5" y1="494" x2="486.5" y2="508"/><line x1="717.5" y1="494" x2="717.5" y2="508"/>
</g>
<g stroke="#ff0000" stroke-width="1" fill="none">
<rect x="453.5" y="244.5" width="297" height="297"/>
<rect x="453.5" y="232.5" width="11.0" height="12.0"/>
<rect x="441.5" y="244.5" width="12.0" height="11.0"/>
<rect x="739.5" y="232.5" width="11.0" height="12.0"/>
<rect x="750.5" y="244.5" width="12.0" height="11.0"/>
<rect x="441.5" y="530.5" width="12.0" height="11.0"/>
<rect x="453.5" y="541.5" width="11.0" height="10.0"/>
<rect x="750.5" y="530.5" width="12.0" height="11.0"/>
<rect x="739.5" y="541.5" width="11.0" height="10.0"/>
</g>
<g>
<rect x="463" y="240" width="1" height="306" fill="#000"/>
<rect x="462" y="240" width="1" height="306" fill="#f2f2f2"/><rect x="464" y="240" width="1" height="306" fill="#f2f2f2"/>
<rect x="556" y="240" width="1" height="306" fill="#000"/>
<rect x="555" y="240" width="1" height="306" fill="#f2f2f2"/><rect x="557" y="240" width="1" height="306" fill="#f2f2f2"/>
<rect x="649" y="240" width="1" height="306" fill="#000"/>
<rect x="648" y="240" width="1" height="306" fill="#f2f2f2"/><rect x="650" y="240" width="1" height="306" fill="#f2f2f2"/>
<rect x="741" y="240" width="1" height="306" fill="#000"/>
<rect x="740" y="240" width="1" height="306" fill="#f2f2f2"/><rect x="742" y="240" width="1" height="306" fill="#f2f2f2"/>
<rect x="449" y="254" width="307" height="1" fill="#000"/>
<rect x="449" y="253" width="307" height="1" fill="#f2f2f2"/><rect x="449" y="255" width="307" height="1" fill="#f2f2f2"/>
<rect x="449" y="346" width="307" height="1" fill="#000"/>
<rect x="449" y="345" width="307" height="1" fill="#f2f2f2"/><rect x="449" y="347" width="307" height="1" fill="#f2f2f2"/>
<rect x="449" y="439" width="307" height="1" fill="#000"/>
<rect x="449" y="438" width="307" height="1" fill="#f2f2f2"/><rect x="449" y="440" width="307" height="1" fill="#f2f2f2"/>
<rect x="449" y="532" width="307" height="1" fill="#000"/>
<rect x="449" y="531" width="307" height="1" fill="#f2f2f2"/><rect x="449" y="533" width="307" height="1" fill="#f2f2f2"/>
</g>
<g transform="translate(463.5 244.5) rotate(0)" stroke="#fff" stroke-width="1" fill="#000" shape-rendering="auto"><rect x="-5.5" y="-3" width="11" height="3"/><path d="M-3.5 -3 L-3.5 -6 L3.5 -6 L3.5 -3"/><path d="M-1.5 -6 L-1.5 -10 L1.5 -10 L1.5 -6"/></g>
<g transform="translate(463.5 541.5) rotate(180)" stroke="#fff" stroke-width="1" fill="#000" shape-rendering="auto"><rect x="-5.5" y="-3" width="11" height="3"/><path d="M-3.5 -3 L-3.5 -6 L3.5 -6 L3.5 -3"/><path d="M-1.5 -6 L-1.5 -10 L1.5 -10 L1.5 -6"/></g>
<g transform="translate(556.5 244.5) rotate(0)" stroke="#fff" stroke-width="1" fill="#000" shape-rendering="auto"><rect x="-5.5" y="-3" width="11" height="3"/><path d="M-3.5 -3 L-3.5 -6 L3.5 -6 L3.5 -3"/><path d="M-1.5 -6 L-1.5 -10 L1.5 -10 L1.5 -6"/></g>
<g transform="translate(556.5 541.5) rotate(180)" stroke="#fff" stroke-width="1" fill="#000" shape-rendering="auto"><rect x="-5.5" y="-3" width="11" height="3"/><path d="M-3.5 -3 L-3.5 -6 L3.5 -6 L3.5 -3"/><path d="M-1.5 -6 L-1.5 -10 L1.5 -10 L1.5 -6"/></g>
<g transform="translate(649.5 244.5) rotate(0)" stroke="#fff" stroke-width="1" fill="#000" shape-rendering="auto"><rect x="-5.5" y="-3" width="11" height="3"/><path d="M-3.5 -3 L-3.5 -6 L3.5 -6 L3.5 -3"/><path d="M-1.5 -6 L-1.5 -10 L1.5 -10 L1.5 -6"/></g>
<g transform="translate(649.5 541.5) rotate(180)" stroke="#fff" stroke-width="1" fill="#000" shape-rendering="auto"><rect x="-5.5" y="-3" width="11" height="3"/><path d="M-3.5 -3 L-3.5 -6 L3.5 -6 L3.5 -3"/><path d="M-1.5 -6 L-1.5 -10 L1.5 -10 L1.5 -6"/></g>
<g transform="translate(741.5 244.5) rotate(0)" stroke="#fff" stroke-width="1" fill="#000" shape-rendering="auto"><rect x="-5.5" y="-3" width="11" height="3"/><path d="M-3.5 -3 L-3.5 -6 L3.5 -6 L3.5 -3"/><path d="M-1.5 -6 L-1.5 -10 L1.5 -10 L1.5 -6"/></g>
<g transform="translate(741.5 541.5) rotate(180)" stroke="#fff" stroke-width="1" fill="#000" shape-rendering="auto"><rect x="-5.5" y="-3" width="11" height="3"/><path d="M-3.5 -3 L-3.5 -6 L3.5 -6 L3.5 -3"/><path d="M-1.5 -6 L-1.5 -10 L1.5 -10 L1.5 -6"/></g>
<g transform="translate(453.5 254.5) rotate(-90)" stroke="#fff" stroke-width="1" fill="#000" shape-rendering="auto"><rect x="-5.5" y="-3" width="11" height="3"/><path d="M-3.5 -3 L-3.5 -6 L3.5 -6 L3.5 -3"/><path d="M-1.5 -6 L-1.5 -10 L1.5 -10 L1.5 -6"/></g>
<g transform="translate(750.5 254.5) rotate(90)" stroke="#fff" stroke-width="1" fill="#000" shape-rendering="auto"><rect x="-5.5" y="-3" width="11" height="3"/><path d="M-3.5 -3 L-3.5 -6 L3.5 -6 L3.5 -3"/><path d="M-1.5 -6 L-1.5 -10 L1.5 -10 L1.5 -6"/></g>
<g transform="translate(453.5 346.5) rotate(-90)" stroke="#fff" stroke-width="1" fill="#000" shape-rendering="auto"><rect x="-5.5" y="-3" width="11" height="3"/><path d="M-3.5 -3 L-3.5 -6 L3.5 -6 L3.5 -3"/><path d="M-1.5 -6 L-1.5 -10 L1.5 -10 L1.5 -6"/></g>
<g transform="translate(750.5 346.5) rotate(90)" stroke="#fff" stroke-width="1" fill="#000" shape-rendering="auto"><rect x="-5.5" y="-3" width="11" height="3"/><path d="M-3.5 -3 L-3.5 -6 L3.5 -6 L3.5 -3"/><path d="M-1.5 -6 L-1.5 -10 L1.5 -10 L1.5 -6"/></g>
<g transform="translate(453.5 439.5) rotate(-90)" stroke="#fff" stroke-width="1" fill="#000" shape-rendering="auto"><rect x="-5.5" y="-3" width="11" height="3"/><path d="M-3.5 -3 L-3.5 -6 L3.5 -6 L3.5 -3"/><path d="M-1.5 -6 L-1.5 -10 L1.5 -10 L1.5 -6"/></g>
<g transform="translate(750.5 439.5) rotate(90)" stroke="#fff" stroke-width="1" fill="#000" shape-rendering="auto"><rect x="-5.5" y="-3" width="11" height="3"/><path d="M-3.5 -3 L-3.5 -6 L3.5 -6 L3.5 -3"/><path d="M-1.5 -6 L-1.5 -10 L1.5 -10 L1.5 -6"/></g>
<g transform="translate(453.5 532.5) rotate(-90)" stroke="#fff" stroke-width="1" fill="#000" shape-rendering="auto"><rect x="-5.5" y="-3" width="11" height="3"/><path d="M-3.5 -3 L-3.5 -6 L3.5 -6 L3.5 -3"/><path d="M-1.5 -6 L-1.5 -10 L1.5 -10 L1.5 -6"/></g>
<g transform="translate(750.5 532.5) rotate(90)" stroke="#fff" stroke-width="1" fill="#000" shape-rendering="auto"><rect x="-5.5" y="-3" width="11" height="3"/><path d="M-3.5 -3 L-3.5 -6 L3.5 -6 L3.5 -3"/><path d="M-1.5 -6 L-1.5 -10 L1.5 -10 L1.5 -6"/></g>
<g stroke="#00ff00" stroke-width="1" fill="none">
<line x1="778.5" y1="252" x2="778.5" y2="535"/>
<line x1="769" y1="254.5" x2="784" y2="254.5"/>
<line x1="769" y1="346.5" x2="784" y2="346.5"/>
<line x1="769" y1="439.5" x2="784" y2="439.5"/>
<line x1="769" y1="532.5" x2="784" y2="532.5"/>
<line x1="461" y1="569.5" x2="744" y2="569.5"/>
<line x1="463.5" y1="561" x2="463.5" y2="574"/>
<line x1="556.5" y1="561" x2="556.5" y2="574"/>
<line x1="649.5" y1="561" x2="649.5" y2="574"/>
<line x1="741.5" y1="561" x2="741.5" y2="574"/>
</g>
<g fill="#00ff00" font-family="'Liberation Serif',serif" font-size="12" font-weight="700" text-anchor="middle" shape-rendering="auto">
<text transform="translate(777 300.5) rotate(-90)">397</text>
<text x="510.0" y="568">397</text>
<text transform="translate(777 393.0) rotate(-90)">397</text>
<text x="603.0" y="568">397</text>
<text transform="translate(777 486.0) rotate(-90)">397</text>
<text x="695.5" y="568">397</text>
<text transform="translate(711 392) rotate(-90)">1000</text>
<text x="602" y="502">1000</text>
</g>
</svg>
<div class="a" style="left:826px;top:230px;width:17px;height:346px;background:#f7f7f5;border-left:1px solid #e4e4e0"></div>
<div class="a" style="left:399px;top:576px;width:444px;height:17px;background:#f5f5f2;border-top:1px solid #e4e4e0"></div>
<div class="a" style="left:828px;top:231px;width:14px;height:15px;border:1px solid #e0e0da;border-radius:2px;background:#eeeee9"><svg width="12" height="13" viewBox="0 0 12 13" style="position:absolute;left:0;top:0"><path d="M2.5 8.5L6 5l3.5 3.5" fill="none" stroke="#c4c4be" stroke-width="2"/></svg></div>
<div class="a" style="left:400px;top:578px;width:15px;height:14px;border:1px solid #e0e0da;border-radius:2px;background:#eeeee9"><svg width="13" height="12" viewBox="0 0 13 12" style="position:absolute;left:0;top:0"><path d="M8.5 2.5L5 6l3.5 3.5" fill="none" stroke="#c4c4be" stroke-width="2"/></svg></div>
<div class="a" style="left:0;top:593px;width:850px;height:3px;background:#fff"></div>
<div class="a" style="left:501px;top:485px;width:349px;height:111px;background:rgba(255,255,255,0.9)"></div>
<svg class="a" style="left:501px;top:485px" width="349" height="111" viewBox="501 485 349 111">
<defs><linearGradient id="fl" gradientUnits="userSpaceOnUse" x1="508" y1="490" x2="595" y2="585"><stop offset="0" stop-color="#f0912c"/><stop offset="0.4" stop-color="#ea5f1a"/><stop offset="0.75" stop-color="#dc3a10"/><stop offset="1" stop-color="#e4481a"/></linearGradient></defs>
<path fill="url(#fl)" fill-rule="evenodd" d="M506 487.4 C509 497.5 519 506.5 534.8 507.5 C536 503 535.5 498 533.8 493.4 C538.5 499.5 546.5 504.5 562 505 A43 43 0 1 1 519 561 C517.5 554 517.8 547 519.4 540.4 C522 546 526 549.5 531 549 C531.6 545 533 542 534.8 539.5 C522 529 509 513 506 487.4 Z M591.3 555.4 A24.7 24.7 0 1 0 541.9 555.4 A24.7 24.7 0 1 0 591.3 555.4 Z"/>
<circle cx="572.4" cy="556.9" r="14.1" fill="#dc3a14"/>
<path fill="#fff" d="M570 549.8h4.8v5.2h3.4l-5.8 6-5.8-6h3.4z"/><rect x="564.8" y="563.5" width="16" height="2.3" fill="#fff"/>
</svg>
<div class="a" style="left:600px;top:496px;width:250px;height:86px;white-space:nowrap;font-family:'Liberation Sans','Noto Sans CJK SC',sans-serif;font-weight:900;font-size:66px;line-height:86px;color:#e8500f;transform-origin:0 0;transform:scaleX(1.225)"><span style="margin-left:2px">下载火</span></div>
<div class="a" style="left:613px;top:568px;width:237px;height:28px;white-space:nowrap;font-family:'Liberation Sans',sans-serif;font-weight:700;font-size:24px;line-height:28px;color:#e2541c;letter-spacing:5.1px">xiazaihuo.com</div>
</div>
</body></html>
